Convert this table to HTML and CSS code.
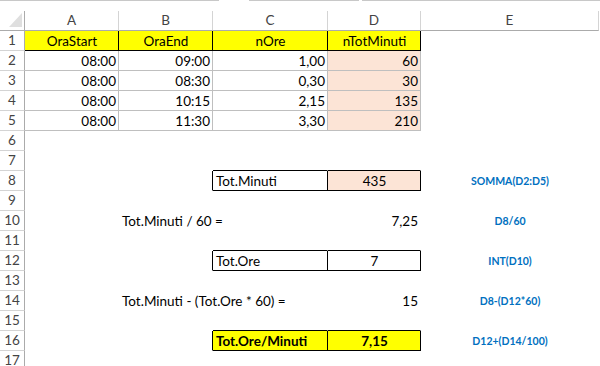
FILE: index.html
```html
<!DOCTYPE html>
<html lang="it">
<head>
<meta charset="utf-8">
<title>Foglio</title>
<link rel="stylesheet" href="styles.css">
</head>
<body>
<div class="sheet">
  <div class="topbar"><span class="seg s1"></span><span class="gap g1"></span><span class="seg s2"></span><span class="gap g2"></span><span class="seg s3"></span></div>

  <div class="corner"><svg width="24" height="19" viewBox="0 0 24 19"><polygon points="22,2 22,16 9,16" fill="#dfdfdf"/></svg></div>
  <div class="ch">A</div><div class="ch">B</div><div class="ch">C</div><div class="ch">D</div><div class="ch">E</div><div class="fill"></div>

  <div class="rh">1</div>
  <div class="c y kr kb m">OraStart</div><div class="c y kr kb m">OraEnd</div><div class="c y kr kb m">nOre</div><div class="c y kr kb m">nTotMinuti</div><div class="c"></div><div class="fill"></div>

  <div class="rh">2</div>
  <div class="c g r">08:00</div><div class="c g r">09:00</div><div class="c g r">1,00</div><div class="c g p r">60</div><div class="c"></div><div class="fill"></div>

  <div class="rh">3</div>
  <div class="c g r">08:00</div><div class="c g r">08:30</div><div class="c g r">0,30</div><div class="c g p r">30</div><div class="c"></div><div class="fill"></div>

  <div class="rh">4</div>
  <div class="c g r">08:00</div><div class="c g r">10:15</div><div class="c g r">2,15</div><div class="c g p r">135</div><div class="c"></div><div class="fill"></div>

  <div class="rh">5</div>
  <div class="c g r">08:00</div><div class="c g r">11:30</div><div class="c g r">3,30</div><div class="c g p r">210</div><div class="c"></div><div class="fill"></div>

  <div class="rh">6</div>
  <div class="c"></div><div class="c"></div><div class="c"></div><div class="c"></div><div class="c"></div><div class="fill"></div>

  <div class="rh">7</div>
  <div class="c"></div><div class="c"></div><div class="c kb"></div><div class="c kb"></div><div class="c"></div><div class="fill"></div>

  <div class="rh">8</div>
  <div class="c"></div><div class="c kr"></div><div class="c kr kb">Tot.Minuti</div><div class="c p kr kb m">435</div><div class="c fx">SOMMA(D2:D5)</div><div class="fill"></div>

  <div class="rh">9</div>
  <div class="c"></div><div class="c"></div><div class="c"></div><div class="c"></div><div class="c"></div><div class="fill"></div>

  <div class="rh">10</div>
  <div class="c"></div><div class="c">Tot.Minuti / 60 =</div><div class="c"></div><div class="c r">7,25</div><div class="c fx">D8/60</div><div class="fill"></div>

  <div class="rh">11</div>
  <div class="c"></div><div class="c"></div><div class="c kb"></div><div class="c kb"></div><div class="c"></div><div class="fill"></div>

  <div class="rh">12</div>
  <div class="c"></div><div class="c kr"></div><div class="c kr kb">Tot.Ore</div><div class="c kr kb m">7</div><div class="c fx">INT(D10)</div><div class="fill"></div>

  <div class="rh">13</div>
  <div class="c"></div><div class="c"></div><div class="c"></div><div class="c"></div><div class="c"></div><div class="fill"></div>

  <div class="rh">14</div>
  <div class="c"></div><div class="c">Tot.Minuti - (Tot.Ore * 60) =</div><div class="c"></div><div class="c r">15</div><div class="c fx">D8-(D12*60)</div><div class="fill"></div>

  <div class="rh">15</div>
  <div class="c"></div><div class="c"></div><div class="c kb"></div><div class="c kb"></div><div class="c"></div><div class="fill"></div>

  <div class="rh">16</div>
  <div class="c"></div><div class="c kr"></div><div class="c y kr kb b">Tot.Ore/Minuti</div><div class="c y kr kb b m">7,15</div><div class="c fx">D12+(D14/100)</div><div class="fill"></div>

  <div class="rh">17</div>
  <div class="c"></div><div class="c"></div><div class="c"></div><div class="c"></div><div class="c"></div><div class="fill"></div>
</div>
</body>
</html>
```

FILE: styles.css
```css
html, body {
  margin: 0;
  padding: 0;
  background: #ffffff;
  overflow: hidden;
  width: 600px;
  height: 366px;
}

.sheet {
  display: grid;
  grid-template-columns: 25px 94px 94px 115px 93px 178px 1fr;
  grid-template-rows: 11px;
  grid-auto-rows: 20px;
  font-family: Lato, "Liberation Sans", sans-serif;
  font-size: 13.5px;
  color: #000000;
}

.topbar {
  grid-column: 1 / -1;
  display: flex;
  height: 11px;
}
.seg { border-top: 1px solid #c8c8c8; }
.s1 { width: 219px; }
.g1 { width: 30px; }
.s2 { width: 110px; }
.g2 { width: 3px; }
.s3 { flex: 1; }

.corner {
  box-sizing: border-box;
  border-right: 1px solid #ababab;
  border-bottom: 1px solid #ababab;
}
.corner svg { display: block; }

.ch {
  box-sizing: border-box;
  border-right: 1px solid #d4d4d4;
  border-bottom: 1px solid #ababab;
  text-align: center;
  line-height: 19px;
  color: #444444;
}

.fill { }

.rh {
  box-sizing: border-box;
  border-right: 1px solid #ababab;
  border-bottom: 1px solid #d4d4d4;
  text-align: center;
  line-height: 19px;
  color: #444444;
}

.c {
  box-sizing: border-box;
  border-right: 1px solid transparent;
  border-bottom: 1px solid transparent;
  padding: 0 2px 0 3px;
  line-height: 20px;
  white-space: nowrap;
  overflow: visible;
}

.g { border-right-color: #bfbfbf; border-bottom-color: #bfbfbf; }
.kr { border-right-color: #000000; }
.kb { border-bottom-color: #000000; }
.y { background: #ffff00; }
.p { background: #fce4d6; }
.r { text-align: right; }
.m { text-align: center; }
.b { font-weight: 700; }

.fx {
  text-align: center;
  font-weight: 700;
  font-size: 10.5px;
  color: #0070c0;
}
```
